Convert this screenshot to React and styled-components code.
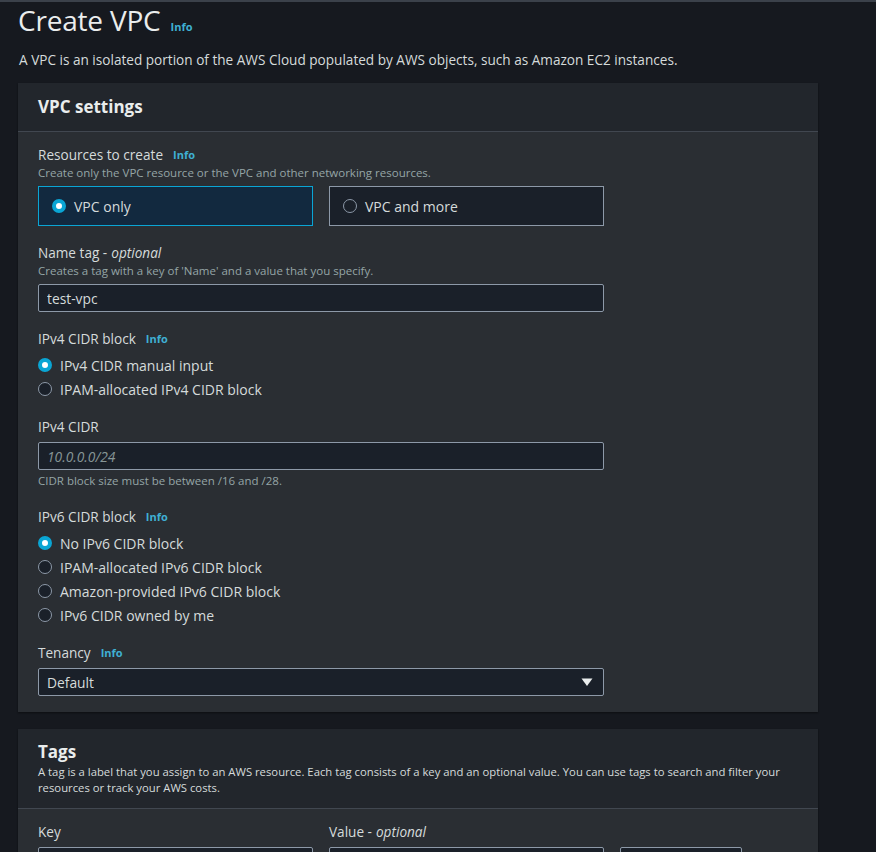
import React, { useState } from "react";
import styled, { createGlobalStyle } from "styled-components";

const Global = createGlobalStyle`
  html, body {
    margin: 0;
    padding: 0;
    background: #16191f;
  }
  body {
    border-top: 2px solid #3b414a;
    font-family: "Open Sans", "Noto Sans", sans-serif;
    color: #d5dbdb;
  }
`;

const Page = styled.main`
  width: 800px;
  padding: 0 58px 40px 18px;
`;

const TitleRow = styled.div`
  display: flex;
  align-items: baseline;
  gap: 10px;
  height: 38px;
`;

const Title = styled.h1`
  margin: 0;
  font-size: 28px;
  font-weight: 400;
  line-height: 36px;
  letter-spacing: -0.2px;
  color: #eaeded;
`;

const Info = styled.a`
  font-size: 11px;
  font-weight: 700;
  color: #3fb0d3;
  margin-left: ${({ gap }) => gap || 0}px;
  cursor: pointer;
`;

const Lead = styled.p`
  margin: 11px 0 14px 1px;
  font-size: 13.6px;
  line-height: 18px;
  color: #d5dbdb;
`;

const Panel = styled.section`
  background: #2a2e33;
  box-shadow: 0 1px 2px rgba(0, 0, 0, 0.45);
  margin-top: ${({ top }) => top || 0}px;
`;

const PanelHead = styled.header`
  background: #22262c;
  border-bottom: 1px solid #414750;
  padding: ${({ compact }) => (compact ? "12px 20px 12px" : "13px 20px")};
`;

const PanelTitle = styled.h2`
  margin: 0;
  font-size: 17px;
  font-weight: 700;
  line-height: 22px;
  color: #eaeded;
`;

const PanelDesc = styled.p`
  margin: 1px 0 0;
  font-size: 11.3px;
  line-height: 16px;
  color: #d5dbdb;
`;

const PanelBody = styled.div`
  padding: 13px 20px 16px;
`;

const Field = styled.div`
  margin-top: ${({ top }) => top || 0}px;
`;

const Label = styled.div`
  height: 20px;
  font-size: 13.6px;
  line-height: 20px;
  color: #d5dbdb;
  display: flex;
  align-items: center;
  white-space: nowrap;

  em {
    font-style: italic;
    margin-left: 4px;
  }
`;

const Hint = styled.div`
  font-size: 11.5px;
  line-height: 16px;
  color: #95a5a6;
  margin-top: ${({ top }) => top || 0}px;
`;

const Tiles = styled.div`
  display: grid;
  grid-template-columns: 275px 275px;
  gap: 16px;
  margin-top: 5px;
`;

const Tile = styled.label`
  display: flex;
  align-items: center;
  gap: 8px;
  height: 38px;
  padding: 0 13px;
  border: 1px solid ${({ checked }) => (checked ? "#0aa5d4" : "#8d99a8")};
  background: ${({ checked }) => (checked ? "#12293f" : "#1a2029")};
  font-size: 14px;
  color: #d5dbdb;
  cursor: pointer;
`;

const Dot = styled.span`
  width: 14px;
  height: 14px;
  box-sizing: border-box;
  border-radius: 50%;
  flex-shrink: 0;
  border: ${({ checked }) =>
    checked ? "4.5px solid #0aa5d4" : "1.5px solid #8d99a8"};
  background: ${({ checked }) => (checked ? "#ffffff" : "#1a2029")};
`;

const RadioList = styled.div`
  margin-top: 4px;
`;

const RadioRow = styled.label`
  display: flex;
  align-items: center;
  gap: 8px;
  height: 24px;
  font-size: 14px;
  color: #d5dbdb;
  cursor: pointer;
`;

const Input = styled.input`
  display: block;
  box-sizing: border-box;
  width: ${({ w }) => w || 566}px;
  height: 28px;
  margin-top: 5px;
  padding: 0 8px;
  background: #1a2029;
  border: 1px solid #8d99a8;
  border-radius: 2px;
  font-family: inherit;
  font-size: 13.8px;
  color: #d5dbdb;
  outline: none;

  &::placeholder {
    color: #879596;
    font-style: italic;
  }
`;

const Select = styled.div`
  box-sizing: border-box;
  width: 566px;
  height: 28px;
  margin-top: 5px;
  padding: 0 10px 0 8px;
  display: flex;
  align-items: center;
  justify-content: space-between;
  background: #1a2029;
  border: 1px solid #8d99a8;
  border-radius: 2px;
  font-size: 13.8px;
  color: #d5dbdb;
`;

const TagGrid = styled.div`
  display: grid;
  grid-template-columns: 275px 275px 122px;
  column-gap: 16px;
  align-items: end;
`;

const Caret = () => (
  <svg width="12" height="10" viewBox="0 0 12 10">
    <path d="M0.5 1.5 H11.5 L6 9 Z" fill="#eaeded" />
  </svg>
);

const Radio = ({ checked, label, onClick }) => (
  <RadioRow onClick={onClick}>
    <Dot checked={checked} />
    {label}
  </RadioRow>
);

const ipv6Options = [
  "No IPv6 CIDR block",
  "IPAM-allocated IPv6 CIDR block",
  "Amazon-provided IPv6 CIDR block",
  "IPv6 CIDR owned by me",
];

export default function App() {
  const [mode, setMode] = useState("only");
  const [v4, setV4] = useState(0);
  const [v6, setV6] = useState(0);

  return (
    <Page>
      <Global />
      <TitleRow>
        <Title>Create VPC</Title>
        <Info>Info</Info>
      </TitleRow>
      <Lead>
        A VPC is an isolated portion of the AWS Cloud populated by AWS objects,
        such as Amazon EC2 instances.
      </Lead>

      <Panel>
        <PanelHead>
          <PanelTitle>VPC settings</PanelTitle>
        </PanelHead>
        <PanelBody>
          <Field>
            <Label>
              Resources to create <Info gap={10}>Info</Info>
            </Label>
            <Hint>
              Create only the VPC resource or the VPC and other networking
              resources.
            </Hint>
            <Tiles>
              <Tile checked={mode === "only"} onClick={() => setMode("only")}>
                <Dot checked={mode === "only"} />
                VPC only
              </Tile>
              <Tile checked={mode === "more"} onClick={() => setMode("more")}>
                <Dot checked={mode === "more"} />
                VPC and more
              </Tile>
            </Tiles>
          </Field>

          <Field top={17}>
            <Label>
              Name tag -<em>optional</em>
            </Label>
            <Hint>
              Creates a tag with a key of 'Name' and a value that you specify.
            </Hint>
            <Input defaultValue="test-vpc" />
          </Field>

          <Field top={17}>
            <Label>
              IPv4 CIDR block <Info gap={10}>Info</Info>
            </Label>
            <RadioList>
              <Radio
                checked={v4 === 0}
                onClick={() => setV4(0)}
                label="IPv4 CIDR manual input"
              />
              <Radio
                checked={v4 === 1}
                onClick={() => setV4(1)}
                label="IPAM-allocated IPv4 CIDR block"
              />
            </RadioList>
          </Field>

          <Field top={16}>
            <Label>IPv4 CIDR</Label>
            <Input placeholder="10.0.0.0/24" />
            <Hint top={3}>CIDR block size must be between /16 and /28.</Hint>
          </Field>

          <Field top={18}>
            <Label>
              IPv6 CIDR block <Info gap={10}>Info</Info>
            </Label>
            <RadioList>
              {ipv6Options.map((opt, i) => (
                <Radio
                  key={opt}
                  checked={v6 === i}
                  onClick={() => setV6(i)}
                  label={opt}
                />
              ))}
            </RadioList>
          </Field>

          <Field top={16}>
            <Label>
              Tenancy <Info gap={10}>Info</Info>
            </Label>
            <Select>
              Default
              <Caret />
            </Select>
          </Field>
        </PanelBody>
      </Panel>

      <Panel top={17}>
        <PanelHead compact>
          <PanelTitle>Tags</PanelTitle>
          <PanelDesc>
            A tag is a label that you assign to an AWS resource. Each tag
            consists of a key and an optional value. You can use tags to search
            and filter your resources or track your AWS costs.
          </PanelDesc>
        </PanelHead>
        <PanelBody>
          <TagGrid>
            <Label>Key</Label>
            <Label>
              Value -<em>optional</em>
            </Label>
            <div />
            <Input w={275} />
            <Input w={275} />
            <Input w={122} />
          </TagGrid>
        </PanelBody>
      </Panel>
    </Page>
  );
}
